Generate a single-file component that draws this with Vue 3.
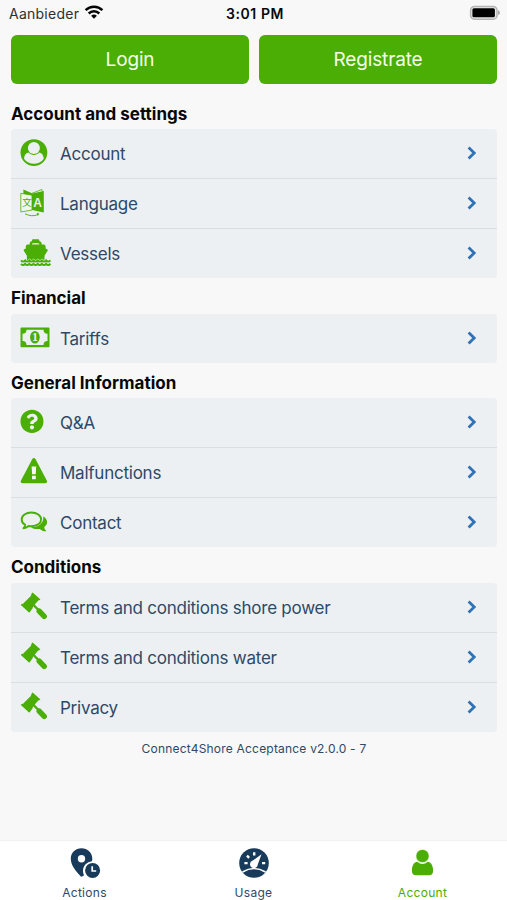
<script setup>
const groups = [
  { title: 'Account and settings', items: [
    { label: 'Account', icon: 'user' },
    { label: 'Language', icon: 'language' },
    { label: 'Vessels', icon: 'ship' }
  ] },
  { title: 'Financial', items: [{ label: 'Tariffs', icon: 'money' }] },
  { title: 'General Information', items: [
    { label: 'Q&A', icon: 'question' },
    { label: 'Malfunctions', icon: 'warning' },
    { label: 'Contact', icon: 'comments' }
  ] },
  { title: 'Conditions', items: [
    { label: 'Terms and conditions shore power', icon: 'gavel' },
    { label: 'Terms and conditions water', icon: 'gavel' },
    { label: 'Privacy', icon: 'gavel' }
  ] }
]
</script>

<template>
  <div class="screen">
    <header class="status">
      <div class="carrier">
        <span>Aanbieder</span>
        <svg class="wifi" width="20" height="16" viewBox="0 0 20 16" fill="none" stroke="#050505" stroke-width="2.5">
          <path d="M1.6 6.1a12 12 0 0 1 16.8 0" />
          <path d="M4.7 9.5a7.6 7.6 0 0 1 10.6 0" />
          <path d="M10 14.7L7.1 11.8a4.2 4.2 0 0 1 5.8 0z" fill="#050505" stroke="none" />
        </svg>
      </div>
      <div class="time">3:01 PM</div>
      <svg class="battery" width="32" height="16" viewBox="0 0 32 16">
        <rect x="1.6" y="1.4" width="26.400" height="12.800" rx="3.800" fill="#e8e8e8" stroke="#b4b4b4" stroke-width="1.500" />
        <rect x="3.400" y="3.300" width="22.500" height="9" rx="1.500" fill="#000" />
        <path d="M29 5.300q2 .8 2 2.400t-2 2.400z" fill="#aaa" />
      </svg>
    </header>

    <div class="buttons">
      <button class="btn">Login</button>
      <button class="btn">Registrate</button>
    </div>

    <main>
      <section v-for="g in groups" :key="g.title">
        <h2 class="title">{{ g.title }}</h2>
        <div class="list">
          <div v-for="i in g.items" :key="i.label" class="row">
            <svg class="icon" width="32" height="49" viewBox="0 0 32 49" fill="#4aae04">
              <template v-if="i.icon === 'user'">
                <circle cx="13.9" cy="23.6" r="13.4" />
                <circle cx="13.9" cy="19.1" r="6" fill="#ecf0f3" />
                <path d="M4 29.800c.4-3.500 1.700-5.700 4.500-6.200 3.100 3.300 7.700 3.300 10.800 0 2.800.5 4.100 2.700 4.500 6.200-4.800 6.600-15 6.600-19.800 0z" fill="#ecf0f3" />
              </template>
              <template v-else-if="i.icon === 'language'">
                <path d="M3.400 10.600l8.600 3.700v3L3.400 15z" />
                <path d="M12 14.300l10-3.800v2" fill="none" stroke="#4aae04" stroke-width=".8" />
                <path d="M12 14.500L23.800 12v21.500L12 31z" />
                <path d="M.8 14.300L12 16.200V31L.8 33z" fill="#f1f5f2" stroke="#4aae04" stroke-width=".8" />
                <text x="2.200" y="27.300" class="glyph-cjk">文</text>
                <text x="13.300" y="28.200" class="glyph-a">A</text>
                <path d="M5 34.800q6.800 3.500 13 .7" fill="none" stroke="#4aae04" stroke-width=".9" />
                <path d="M16.800 33.700l2.600 1-1.800 2.200z" />
              </template>
              <template v-else-if="i.icon === 'ship'">
                <path d="M9.700 15.500v-1.200q.2-1.900 2-2.100l.8-2h6.300l.8 2q1.800.2 2 2.100v1.200h2.200q1.700.2 1.800 1.900v2.200l1.600.7q.8.500.4 1.500l-3.100 5v4.400q-1.500 1.200-3.100 0-2.600 1.600-5.700 0-3.100 1.600-5.700 0-1.600 1.200-3.100 0v-4.400l-3.100-5q-.4-1 .4-1.500l1.600-.7v-2.200q.1-1.700 1.800-1.900z" />
                <path d="M12 15.500v-1q3.700-1 7.300 0v1z" fill="#ecf0f3" />
                <path d="M1 31.700q2 2 4.200 0 2 2 4.200 0 2 2 4.200 0 2 2 4.200 0 2 2 4.200 0 2 2 4.200 0 2 2 4.200 0" fill="none" stroke="#ecf0f3" stroke-width="3.200" />
                <path d="M1 31.400q2 2.400 4.200 0 2 2.400 4.200 0 2 2.400 4.200 0 2 2.400 4.200 0 2 2.400 4.200 0 2 2.400 4.200 0 2 2.400 4.200 0M1 34.800q2 2.400 4.200 0 2 2.400 4.200 0 2 2.400 4.200 0 2 2.400 4.200 0 2 2.400 4.200 0 2 2.400 4.200 0 2 2.400 4.200 0" fill="none" stroke="#4aae04" stroke-width="2" />
              </template>
              <template v-else-if="i.icon === 'money'">
                <path fill-rule="evenodd" d="M1.500 13.600h27q1 0 1 1v17.600q0 1-1 1h-27q-1 0-1-1V14.600q0-1 1-1zM6.500 15.800q0 4-4 4V27q4 0 4 4h17q0-4 4-4v-7.200q-4 0-4-4z" />
                <ellipse cx="14.900" cy="23.300" rx="4.800" ry="6.300" />
                <text x="11.900" y="27.300" class="glyph-one">1</text>
              </template>
              <g v-else-if="i.icon === 'question'" transform="translate(.1 11.500) scale(.0464)">
                <path d="M504 256c0 136.997-111.043 248-248 248S8 392.997 8 256C8 119.083 119.043 8 256 8s248 111.083 248 248zM262.655 90c-54.497 0-89.255 22.957-116.549 63.758-3.536 5.286-2.353 12.415 2.715 16.258l34.699 26.310c5.205 3.947 12.621 3.008 16.665-2.122 17.864-22.658 30.113-35.797 57.303-35.797 20.429 0 45.698 13.148 45.698 32.958 0 14.976-12.363 22.667-32.534 33.976C247.128 238.528 216 254.941 216 296v4c0 6.627 5.373 12 12 12h56c6.627 0 12-5.373 12-12v-1.333c0-28.462 83.186-29.647 83.186-106.667 0-58.002-60.165-102-116.531-102zM256 338c-25.365 0-46 20.635-46 46 0 25.364 20.635 46 46 46s46-20.636 46-46c0-25.365-20.635-46-46-46z" />
              </g>
              <template v-else-if="i.icon === 'warning'">
                <path d="M12.200 11.200q1.700-2.600 3.400 0l11.200 21.200q1.200 2.600-1.700 2.800H2.700q-2.900-.2-1.700-2.800z" />
                <path d="M11.600 18.400h4.600l-.5 7.800h-3.600zM12 27.800h3.800v3.400H12z" fill="#f6faf5" />
              </template>
              <template v-else-if="i.icon === 'comments'">
                <path d="M11.400 14.500c5.500 0 9.700 3 9.700 6.900s-4.200 6.900-9.700 6.900q-1.500 0-2.800-.3-2.500 2.100-5.100 2.200 1.500-1.400 1.700-3.400C2.900 25.600 1.700 23.700 1.700 21.400c0-3.900 4.200-6.900 9.700-6.900z" fill="none" stroke="#4aae04" stroke-width="1.900" stroke-linejoin="round" />
                <path d="M23.200 18.400c2.500 1.300 3.900 3.200 3.900 5.600 0 2-1.100 3.700-2.900 5 .1 1.600.9 2.900 2.300 4.200-2.900.2-4.900-.7-6.600-2.300-3.400.5-6.800-.1-9.200-1.700 8.200.1 13.500-4.600 12.500-10.800z" />
              </template>
              <template v-else>
                <path d="M12.500 10.200l7.100 6.300-1.700.5-5.500 6.200-.3 1.600-2.900 4.100-7.700-7.100 2.200-.8 7.500-7.600z" stroke="#4aae04" stroke-width="1.200" stroke-linejoin="round" />
                <path d="M13 21.500l5.500 5.500" stroke="#4aae04" stroke-width="2.400" />
                <path d="M19.200 28.200l5 5.200" stroke="#4aae04" stroke-width="5.400" stroke-linecap="round" />
              </template>
            </svg>
            <span class="label">{{ i.label }}</span>
            <svg class="chevron" width="10" height="14" viewBox="0 0 10 14" fill="none" stroke="#2f72b6" stroke-width="2.800">
              <path d="M1.600 1.500L7.200 7 1.600 12.500" />
            </svg>
          </div>
        </div>
      </section>
      <p class="version">Connect4Shore Acceptance v2.0.0 - 7</p>
    </main>

    <nav class="tabs">
      <div class="tab">
        <svg width="34" height="34" viewBox="0 0 34 34" fill="#183b5b">
          <path fill-rule="evenodd" d="M13.500 2.200c6.100 0 10.800 4.600 10.800 10.300 0 1-.1 1.900-.4 2.800-5 .6-8.900 4.500-8.900 9.500 0 1.800.4 3.200 1.100 4.500l-1.300.8q-1.200 1.300-2.400 0C7.600 24.500 2.800 19.500 2.800 12.500c0-5.700 4.600-10.300 10.700-10.300zM13.500 9a3.700 3.700 0 1 0 0 7.400 3.700 3.700 0 0 0 0-7.400z" />
          <circle cx="24.600" cy="24.400" r="7.500" />
          <path d="M24.200 20.300v4.700h4" fill="none" stroke="#fff" stroke-width="1.700" />
        </svg>
        <span>Actions</span>
      </div>
      <div class="tab">
        <svg width="34" height="34" viewBox="0 0 34 34">
          <circle cx="17" cy="17" r="14.800" fill="#183b5b" />
          <path d="M17.200 6.200v3.200M10 9.700l2.100 2.100M7.400 17.100h3.200M25 17.100h3.200" fill="none" stroke="#fff" stroke-width="2.400" />
          <path d="M24.500 8.200L20.800 18.600a3.900 3.900 0 1 1-5-4.100z" fill="#fff" />
          <path d="M5.500 26q11.500-7 23 0" fill="none" stroke="#fff" stroke-width="1.700" />
        </svg>
        <span>Usage</span>
      </div>
      <div class="tab active">
        <svg width="34" height="34" viewBox="0 0 34 34" fill="#4aae04">
          <path d="M11.200 15.800q5.300 4.500 10.600 0c3.600.6 5.300 4.100 5.300 8.900 0 3-1.600 4.500-4 4.500H9.900c-2.400 0-4-1.500-4-4.500 0-4.800 1.700-8.300 5.300-8.900z" />
          <circle cx="16.500" cy="10" r="6.600" stroke="#fff" stroke-width=".6" />
        </svg>
        <span>Account</span>
      </div>
    </nav>
  </div>
</template>

<style>
body {
  margin: 0;
}
</style>

<style scoped>
.screen {
  box-sizing: border-box;
  width: 507px;
  height: 900px;
  display: flex;
  flex-direction: column;
  overflow: hidden;
  background: #f8f8f8;
  font-family: Inter, "Liberation Sans", sans-serif;
}
.status {
  flex: none;
  height: 26px;
  margin-bottom: 9px;
  display: grid;
  grid-template-columns: 1fr auto 1fr;
  align-items: center;
  padding: 0 6px 0 9px;
  color: #080808;
  font-size: 14px;
}
.carrier {
  display: flex;
  align-items: center;
  gap: 5px;
  color: #303030;
  letter-spacing: 0.250px;
}
.wifi {
  margin-top: -2px;
}
.time {
  font-weight: 600;
  letter-spacing: 0.600px;
}
.battery {
  justify-self: end;
}
.buttons {
  flex: none;
  display: flex;
  gap: 10px;
  padding: 0 10px 0 11px;
}
.btn {
  flex: 1;
  height: 49px;
  padding: 0;
  border: 0;
  border-radius: 6px;
  background: #4aae04;
  color: #f3ffec;
  font: 400 19px/49px Inter, "Liberation Sans", sans-serif;
  letter-spacing: -0.150px;
}
main {
  flex: 1;
  padding: 9.500px 10px 0 11px;
}
.title {
  margin: 0;
  height: 35.500px;
  font-size: 17px;
  line-height: 41px;
  font-weight: 700;
  color: #080808;
}
.list {
  border-radius: 4px;
  overflow: hidden;
  background: #ecf0f3;
}
.row {
  height: 49px;
  display: flex;
  align-items: center;
  padding: 0 20px 0 9px;
}
.row + .row {
  border-top: 1px solid #d9dee2;
}
.icon {
  flex: none;
  margin-right: 8px;
}
.label {
  flex: 1;
  font-size: 17px;
  line-height: 24px;
  color: #2e4968;
  letter-spacing: -0.240px;
  padding-top: 1px;
}
.chevron {
  flex: none;
  margin-top: -1px;
}
.glyph-cjk {
  font: 400 9.500px "Noto Sans CJK JP", sans-serif;
}
.glyph-a {
  font: 700 12px "Liberation Sans", sans-serif;
  fill: #ecf0f3;
}
.glyph-one {
  font: 700 12px "Liberation Serif", serif;
  fill: #ecf0f3;
}
.version {
  margin: 8px 0 0;
  font-size: 12px;
  line-height: 18px;
  text-align: center;
  color: #2e4968;
  letter-spacing: 0.200px;
}
.tabs {
  flex: none;
  box-sizing: border-box;
  height: 60px;
  display: grid;
  grid-template-columns: repeat(3, 1fr);
  border-top: 1px solid #f1f1f1;
  background: #fff;
}
.tab {
  display: flex;
  flex-direction: column;
  align-items: center;
  padding-top: 5px;
  font-size: 12px;
  line-height: 16px;
  letter-spacing: 0.280px;
  color: #2e4968;
}
.tab span {
  margin-top: 5px;
}
.tab.active {
  color: #4aae04;
}
</style>
